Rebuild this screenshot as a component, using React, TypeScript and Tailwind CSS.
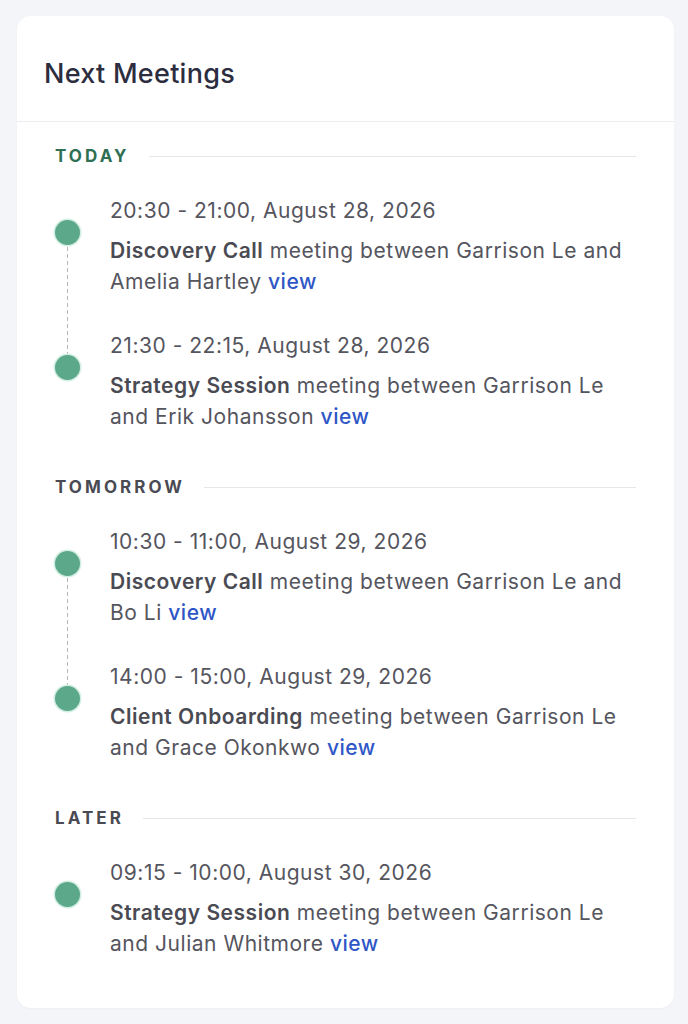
import React from 'react'

type Meeting = {
  time: string
  title: string
  rest: string
}

type Section = {
  label: string
  tone: 'green' | 'gray'
  meetings: Meeting[]
}

const sections: Section[] = [
  {
    label: 'Today',
    tone: 'green',
    meetings: [
      {
        time: '20:30 - 21:00, August 28, 2026',
        title: 'Discovery Call',
        rest: 'meeting between Garrison Le and Amelia Hartley',
      },
      {
        time: '21:30 - 22:15, August 28, 2026',
        title: 'Strategy Session',
        rest: 'meeting between Garrison Le and Erik Johansson',
      },
    ],
  },
  {
    label: 'Tomorrow',
    tone: 'gray',
    meetings: [
      {
        time: '10:30 - 11:00, August 29, 2026',
        title: 'Discovery Call',
        rest: 'meeting between Garrison Le and Bo Li',
      },
      {
        time: '14:00 - 15:00, August 29, 2026',
        title: 'Client Onboarding',
        rest: 'meeting between Garrison Le and Grace Okonkwo',
      },
    ],
  },
  {
    label: 'Later',
    tone: 'gray',
    meetings: [
      {
        time: '09:15 - 10:00, August 30, 2026',
        title: 'Strategy Session',
        rest: 'meeting between Garrison Le and Julian Whitmore',
      },
    ],
  },
]

function MeetingItem({ meeting, last }: { meeting: Meeting; last: boolean }) {
  return (
    <div className={`relative flex ${last ? '' : 'pb-[34px]'}`}>
      {/* dashed connector down to the next dot */}
      {!last && (
        <span className="absolute left-[11.5px] top-[37px] -bottom-[37px] w-[1.5px] bg-[linear-gradient(to_bottom,#b4b4b9_55%,transparent_55%)] bg-[length:1.5px_7px]" />
      )}
      <span className="absolute left-0 top-[24px] h-[25px] w-[25px] rounded-full bg-[#5ba88b] ring-[1.5px] ring-[#d3eee2]" />
      <div className="ml-[55px] flex-1 text-[21px] tracking-[0.025em] text-[#55555e]">
        <div className="leading-[30px]">{meeting.time}</div>
        <p className="mt-[9px] leading-[31px]">
          <span className="font-semibold text-[#4a4a53]">{meeting.title}</span> {meeting.rest}{' '}
          <a href="#" className="font-medium text-[#2f56c6]">
            view
          </a>
        </p>
      </div>
    </div>
  )
}

export default function App() {
  return (
    <div
      className="min-h-screen bg-[#f4f5f9] pl-[17px] pt-[16px]"
      style={{ fontFamily: 'Inter, "Noto Sans", sans-serif' }}
    >
      <div className="w-[657px] rounded-[14px] bg-white shadow-[0_1px_2px_rgba(0,0,0,0.03)]">
        <div className="flex h-[106px] items-center border-b border-[#ececf0] px-[27px] pt-[11px]">
          <h2 className="text-[27px] font-medium tracking-[0.01em] text-[#2c2d3e]">Next Meetings</h2>
        </div>
        <div className="px-[38px] pb-[49px] pt-[22px]">
          {sections.map((section, i) => (
            <div key={section.label} className={i > 0 ? 'mt-[43px]' : ''}>
              <div className="flex items-center gap-[19px]">
                <span
                  className={`text-[17px] font-bold uppercase leading-[24px] tracking-[0.18em] ${
                    section.tone === 'green' ? 'text-[#2f6f53]' : 'text-[#4a4a53]'
                  }`}
                >
                  {section.label}
                </span>
                <span className="h-px flex-1 bg-[#e6e6ea]" />
              </div>
              <div className="mt-[28px]">
                {section.meetings.map((m, j) => (
                  <MeetingItem key={m.time} meeting={m} last={j === section.meetings.length - 1} />
                ))}
              </div>
            </div>
          ))}
        </div>
      </div>
    </div>
  )
}
